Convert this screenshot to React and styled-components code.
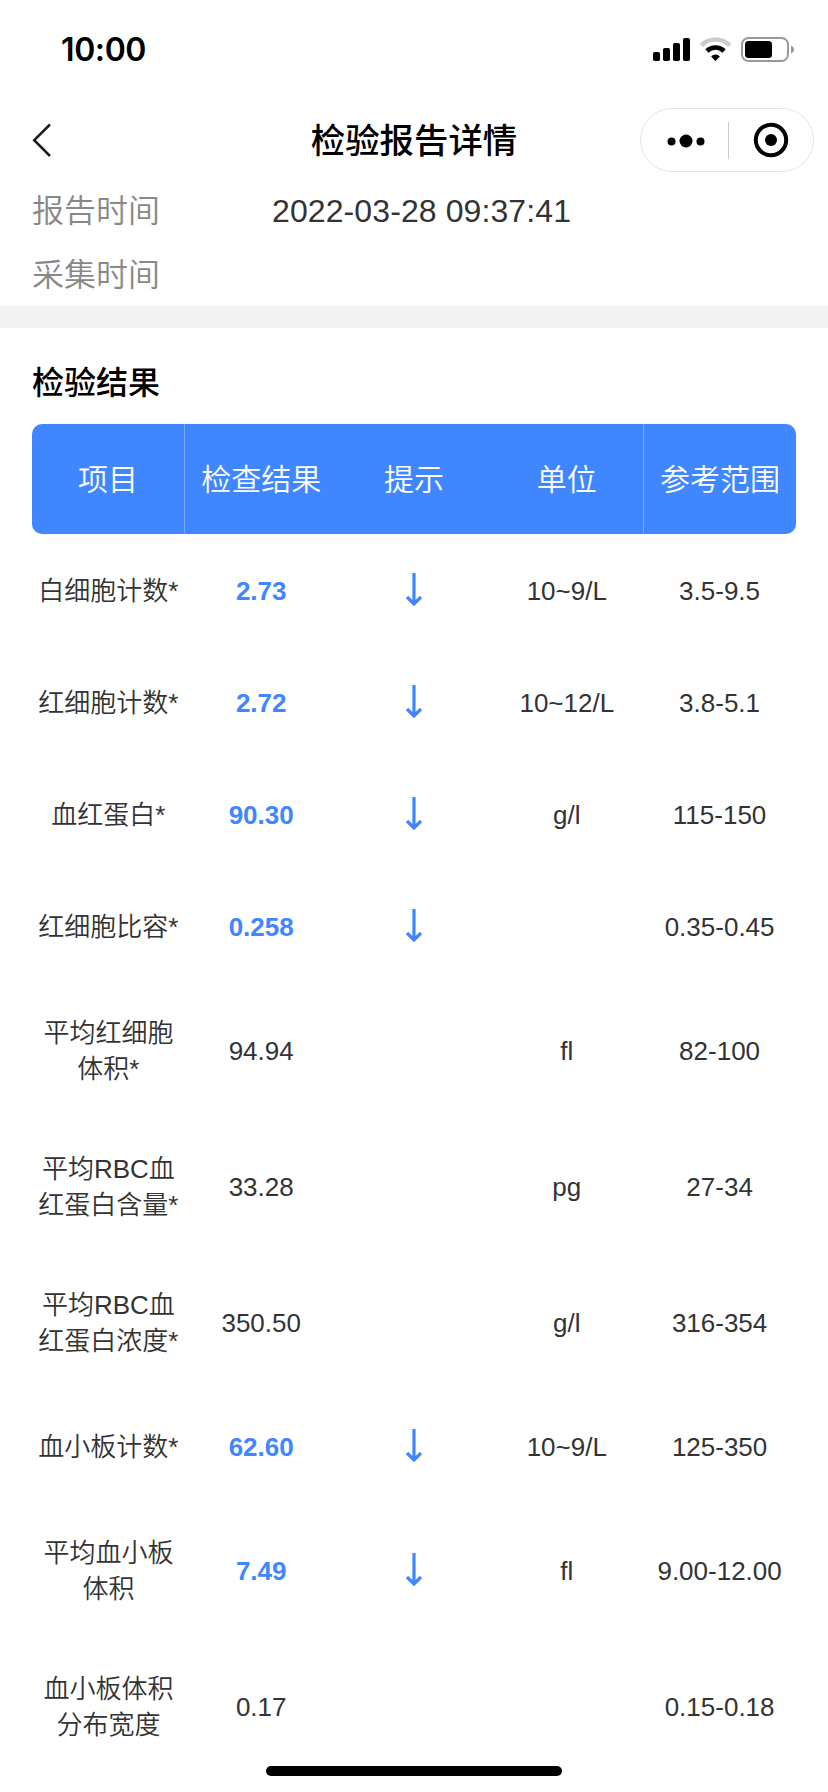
import React from 'react'
import styled, { createGlobalStyle } from 'styled-components'

const GlobalStyle = createGlobalStyle`
  * {
    box-sizing: border-box;
  }

  body {
    margin: 0;
    background: #fff;
    color: #333;
    font-family: 'Liberation Sans', 'Noto Sans CJK SC', sans-serif;
    font-weight: 350;
  }
`

const Screen = styled.div`
  position: relative;
  width: 828px;
  height: 1792px;
  overflow: hidden;
  background: #fff;
`

const StatusBar = styled.div`
  display: flex;
  align-items: center;
  justify-content: space-between;
  height: 88px;
  padding: 12px 33px 0 61px;
`

const Clock = styled.span`
  color: #000;
  font-family: Inter, sans-serif;
  font-size: 32px;
  font-weight: 600;
  letter-spacing: -0.4px;
  line-height: 40px;
`

const NavBar = styled.header`
  display: grid;
  grid-template-columns: 1fr auto 1fr;
  align-items: center;
  height: 104px;
  padding: 0 14px 0 31px;
`

const BackButton = styled.button`
  display: flex;
  padding: 0;
  border: 0;
  background: none;
`

const Title = styled.h1`
  margin: 2px 17px 0 0;
  color: #000;
  font-size: 34.4px;
  font-weight: 500;
  line-height: 48px;
`

const Capsule = styled.div`
  display: flex;
  align-items: center;
  justify-self: end;
  width: 174px;
  height: 64px;
  border: 1px solid #e5e5e5;
  border-radius: 32px;
`

const CapsuleButton = styled.button`
  display: flex;
  flex: 1;
  align-items: center;
  justify-content: center;
  height: 37px;
  padding: 0;
  border: 0;
  background: none;

  &:first-child {
    padding: 1px 0 0 3px;
  }

  & + & {
    border-left: 1px solid #ccc;
  }
`

const Info = styled.dl`
  height: 114px;
  margin: 0;
  padding: 0 32px;
`

const InfoRow = styled.div`
  display: flex;
  height: 64px;
  font-size: 32px;
  line-height: 38px;
`

const InfoLabel = styled.dt`
  width: 240px;
  color: #888;
`

const InfoValue = styled.dd`
  margin: 0;
  letter-spacing: 0.1px;
`

const Results = styled.section`
  padding: 31px 32px 0;
  border-top: 22px solid #f3f3f3;
`

const SectionTitle = styled.h2`
  margin: 0 0 17px;
  color: #000;
  font-size: 32px;
  font-weight: 500;
  line-height: 48px;
`

const Row = styled.div`
  display: grid;
  grid-template-columns: repeat(5, 1fr);
  align-items: center;
  min-height: 112px;
  padding: 33px 0 31px;
`

const HeadRow = styled(Row)`
  align-items: stretch;
  min-height: 0;
  height: 110px;
  padding: 0;
  border-radius: 10px;
  background: #4087ff;
`

const HeadCell = styled.div`
  display: flex;
  align-items: center;
  justify-content: center;
  padding-bottom: 4px;
  color: #fff;
  font-size: 30px;

  &:first-child {
    border-right: 1px solid #79abff;
  }

  &:last-child {
    border-left: 1px solid #79abff;
  }
`

const Cell = styled.div`
  display: flex;
  justify-content: center;
  color: ${props => (props.$low ? '#4087ff' : '#333')};
  font-size: 26px;
  font-weight: ${props => (props.$low ? 700 : 350)};
  line-height: 36px;
  text-align: center;
`

const ArrowIcon = styled.svg`
  margin-bottom: 2px;
`

const HomeIndicator = styled.div`
  position: absolute;
  bottom: 16px;
  left: 266px;
  width: 296px;
  height: 10px;
  border-radius: 5px;
  background: #000;
`

const columns = ['项目', '检查结果', '提示', '单位', '参考范围']

const results = [
  { name: '白细胞计数*', value: '2.73', low: true, unit: '10~9/L', range: '3.5-9.5' },
  { name: '红细胞计数*', value: '2.72', low: true, unit: '10~12/L', range: '3.8-5.1' },
  { name: '血红蛋白*', value: '90.30', low: true, unit: 'g/l', range: '115-150' },
  { name: '红细胞比容*', value: '0.258', low: true, unit: '', range: '0.35-0.45' },
  { name: '平均红细胞体积*', value: '94.94', unit: 'fl', range: '82-100' },
  { name: '平均RBC血红蛋白含量*', value: '33.28', unit: 'pg', range: '27-34' },
  { name: '平均RBC血红蛋白浓度*', value: '350.50', unit: 'g/l', range: '316-354' },
  { name: '血小板计数*', value: '62.60', low: true, unit: '10~9/L', range: '125-350' },
  { name: '平均血小板体积', value: '7.49', low: true, unit: 'fl', range: '9.00-12.00' },
  { name: '血小板体积分布宽度', value: '0.17', unit: '', range: '0.15-0.18' },
]

const StatusIcons = () => (
  <svg width="142" height="26" viewBox="0 0 142 26">
    <rect x="0" y="15" width="7" height="9" rx="1.8" />
    <rect x="10" y="11" width="7" height="13" rx="1.8" />
    <rect x="20" y="6" width="7" height="18" rx="1.8" />
    <rect x="30" y="1" width="7" height="23" rx="1.8" />
    <path d="M48.3 8.3a20.2 20.2 0 0 1 28.4 0" fill="none" stroke="#ccc" strokeWidth="4.6" />
    <path d="M53.9 14a12.4 12.4 0 0 1 17.200 0" fill="none" stroke="#000" strokeWidth="4.6" />
    <path d="M62.5 24l-4.400-4.600a6.300 6.300 0 0 1 8.800 0z" />
    <rect x="89" y="1" width="46" height="23" rx="6.5" fill="none" stroke="#999" strokeWidth="2" />
    <rect x="92" y="4" width="27" height="17" rx="3.5" />
    <path d="M138 8.500c4 1.500 4 6.500 0 8z" fill="#999" />
  </svg>
)

const BackIcon = () => (
  <svg width="20" height="34" viewBox="0 0 20 34">
    <path d="M19 1.500L3.200 17.200L19 33" fill="none" stroke="#1a1a1a" strokeWidth="2.500" />
  </svg>
)

const MoreIcon = () => (
  <svg width="38" height="14" viewBox="0 0 38 14">
    <circle cx="4.500" cy="7.500" r="4" />
    <circle cx="19" cy="7" r="6.500" />
    <circle cx="33.500" cy="7.500" r="4" />
  </svg>
)

const CloseIcon = () => (
  <svg width="36" height="36" viewBox="0 0 36 36">
    <circle cx="18" cy="18" r="15.200" fill="none" stroke="#000" strokeWidth="4" />
    <circle cx="18" cy="18" r="6" />
  </svg>
)

const LowArrow = () => (
  <ArrowIcon width="18" height="34" viewBox="0 0 18 34">
    <path d="M9 0V31M2 24L9 31L16 24" fill="none" stroke="#4087ff" strokeWidth="3.200" />
  </ArrowIcon>
)

const App = () => (
  <>
    <GlobalStyle />
    <Screen>
      <StatusBar>
        <Clock>10:00</Clock>
        <StatusIcons />
      </StatusBar>
      <NavBar>
        <BackButton aria-label="返回">
          <BackIcon />
        </BackButton>
        <Title>检验报告详情</Title>
        <Capsule>
          <CapsuleButton aria-label="更多">
            <MoreIcon />
          </CapsuleButton>
          <CapsuleButton aria-label="关闭">
            <CloseIcon />
          </CapsuleButton>
        </Capsule>
      </NavBar>
      <Info>
        <InfoRow>
          <InfoLabel>报告时间</InfoLabel>
          <InfoValue>2022-03-28 09:37:41</InfoValue>
        </InfoRow>
        <InfoRow>
          <InfoLabel>采集时间</InfoLabel>
        </InfoRow>
      </Info>
      <Results>
        <SectionTitle>检验结果</SectionTitle>
        <HeadRow>
          {columns.map(column => (
            <HeadCell key={column}>{column}</HeadCell>
          ))}
        </HeadRow>
        {results.map(item => (
          <Row key={item.name}>
            <Cell>{item.name}</Cell>
            <Cell $low={item.low}>{item.value}</Cell>
            <Cell>{item.low && <LowArrow />}</Cell>
            <Cell>{item.unit}</Cell>
            <Cell>{item.range}</Cell>
          </Row>
        ))}
      </Results>
      <HomeIndicator />
    </Screen>
  </>
)

export default App
